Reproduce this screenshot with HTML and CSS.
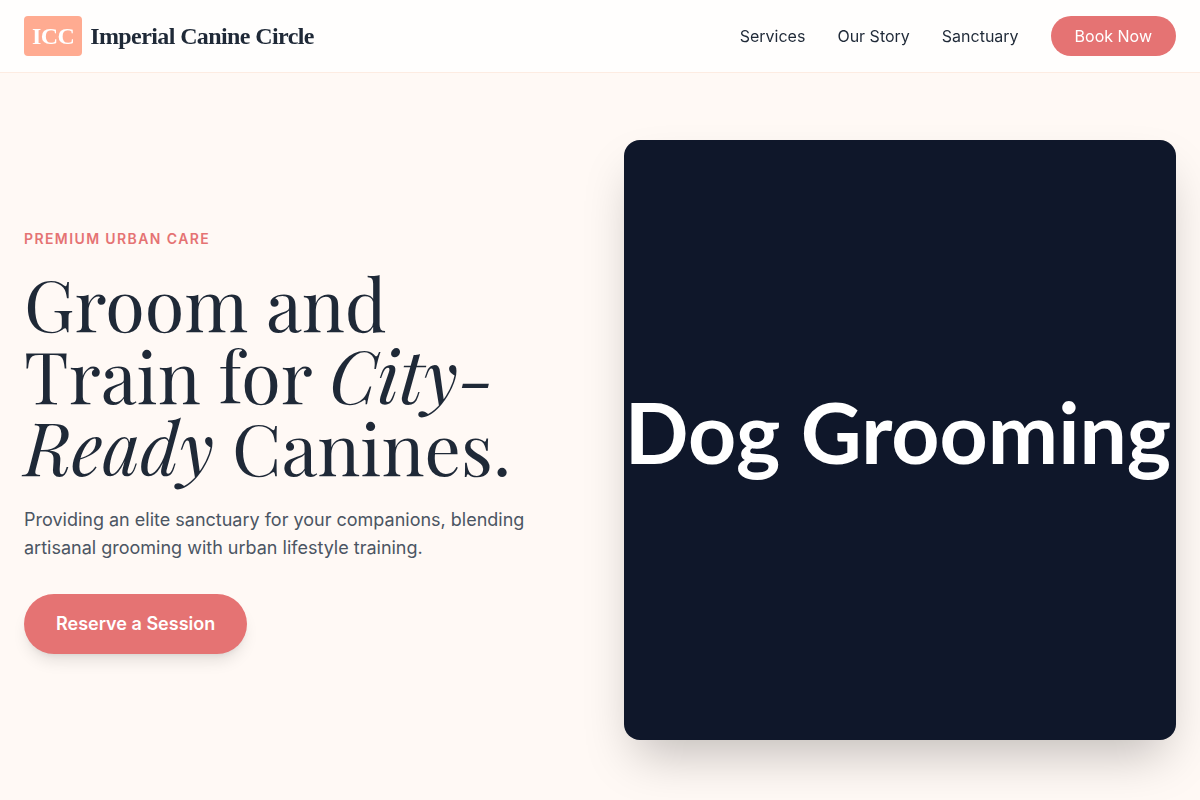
FILE: index.html
```
<!DOCTYPE html>
<html lang="en">
<head>
  <meta charset="UTF-8">
  <meta name="viewport" content="width=device-width, initial-scale=1.0">
  <title>Imperial Canine Circle</title>
  <link rel="stylesheet" href="styles.css">
</head>
<body>
  <!-- Header -->
  <header class="header">
    <a href="#" class="logo">
      <span class="logo-mark">ICC</span>
      <span class="logo-name">Imperial Canine Circle</span>
    </a>
    <nav class="nav">
      <a href="#services" class="nav-link">Services</a>
      <a href="#story" class="nav-link">Our Story</a>
      <a href="#sanctuary" class="nav-link">Sanctuary</a>
      <button type="button" class="btn btn-small">Book Now</button>
    </nav>
  </header>

  <!-- Hero -->
  <main class="hero">
    <div class="hero-text">
      <p class="hero-label"><span class="eyebrow">Premium Urban Care</span></p>
      <h1 class="hero-title">Groom and Train for <em>City-Ready</em> Canines.</h1>
      <p class="hero-copy">Providing an elite sanctuary for your companions, blending artisanal grooming with urban lifestyle training.</p>
      <button type="button" class="btn btn-large">Reserve a Session</button>
    </div>
    <div class="hero-card">Dog Grooming</div>
  </main>
</body>
</html>
```
FILE: styles.css
```
/* Global Styles */
* {
  box-sizing: border-box;
}

body {
  margin: 0;
  font-family: Inter, 'Liberation Sans', sans-serif;
  font-size: 16px;
  line-height: 1.5;
  background-color: #fff9f5;
  color: #1f2937;
}

a {
  color: inherit;
  text-decoration: none;
}

/* Header */
.header {
  position: fixed;
  top: 0;
  left: 0;
  right: 0;
  z-index: 10;
  display: flex;
  align-items: center;
  justify-content: space-between;
  padding: 16px 24px;
  background-color: rgba(255, 255, 255, 0.8);
  border-bottom: 1px solid #fdece2;
}

.logo {
  display: flex;
  align-items: center;
  gap: 8px;
  font-family: 'Liberation Serif', serif;
  font-size: 24px;
  font-weight: bold;
  line-height: 32px;
  letter-spacing: -0.025em;
}

.logo-mark {
  padding: 4px 8px;
  border-radius: 4px;
  background-color: #ffab91;
  color: #fff;
}

.nav {
  display: flex;
  align-items: center;
  gap: 32px;
}

.nav-link:hover {
  color: #e57373;
}

/* Buttons */
.btn {
  border: none;
  border-radius: 30px;
  background-color: #e57373;
  color: #fff;
  font-family: inherit;
  cursor: pointer;
}

.btn-small {
  padding: 8px 24px;
  font-size: 16px;
  line-height: 24px;
}

.btn-large {
  padding: 16px 32px;
  font-size: 18px;
  font-weight: 600;
  line-height: 28px;
  box-shadow: 0 10px 15px -3px rgba(0, 0, 0, 0.1), 0 4px 6px -4px rgba(0, 0, 0, 0.1);
}

.btn:hover {
  background-color: #d96262;
}

/* Hero */
.hero {
  display: grid;
  grid-template-columns: repeat(2, minmax(0, 1fr));
  align-items: center;
  gap: 48px;
  max-width: 1280px;
  min-height: 100vh;
  margin: 0 auto;
  padding: 80px 24px 0;
}

.hero-label {
  margin: 0 0 16px;
}

.eyebrow {
  color: #e57373;
  font-size: 14px;
  font-weight: 600;
  letter-spacing: 0.1em;
  text-transform: uppercase;
}

.hero-title {
  margin: 0 0 24px;
  font-family: 'Playfair Display', 'Liberation Serif', serif;
  font-size: 72px;
  font-weight: 400;
  line-height: 72px;
}

.hero-copy {
  max-width: 512px;
  margin: 0 0 32px;
  color: #4b5563;
  font-size: 18px;
  line-height: 28px;
}

.hero-card {
  display: flex;
  align-items: center;
  justify-content: center;
  height: 600px;
  padding: 0 4px 16px 0;
  border-radius: 16px;
  background-color: #0f172a;
  color: #fff;
  font-family: Lato, sans-serif;
  font-size: 84px;
  font-weight: 700;
  line-height: 1;
  white-space: nowrap;
  box-shadow: 0 25px 50px -12px rgba(0, 0, 0, 0.25);
}

/* Mobile responsiveness */
@media (max-width: 768px) {
  .hero {
    grid-template-columns: 1fr;
    padding-bottom: 48px;
  }

  .nav-link {
    display: none;
  }

  .hero-title {
    font-size: 48px;
    line-height: 48px;
  }

  .hero-card {
    height: 400px;
    font-size: 48px;
  }
}
```
